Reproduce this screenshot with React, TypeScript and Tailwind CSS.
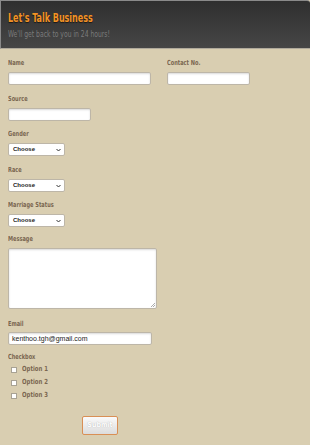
const narrow = { fontFamily: '"DejaVu Sans Condensed", "Liberation Sans", sans-serif' };

const Label = ({ children, className = "" }: { children: React.ReactNode; className?: string }) => (
  <div className={`h-[8px] text-[7px] leading-[8px] font-bold text-[#7a6650] ${className}`} style={narrow}>
    <span className="inline-block origin-left scale-x-[0.8] whitespace-nowrap">{children}</span>
  </div>
);

const Input = ({ w, value }: { w: string; value?: string }) => (
  <div
    className={`${w} h-[13px] bg-white border border-[#bdb6a8] rounded-[2px] shadow-[inset_0_1px_2px_rgba(0,0,0,0.15)] px-[3px] text-[7px] leading-[11px] text-[#222]`}
    style={{ fontFamily: '"Liberation Sans", Arial, sans-serif' }}
  >
    {value}
  </div>
);

const Select = () => (
  <div className="w-[57px] h-[13px] bg-white border border-[#bdb6a8] rounded-[2px] flex items-center justify-between pl-[4px] pr-[3px]">
    <span className="text-[6px] font-bold text-[#222]" style={{ fontFamily: '"Liberation Sans", Arial, sans-serif' }}>
      Choose
    </span>
    <svg width="5" height="4" viewBox="0 0 5 4">
      <path d="M0.5 1 L2.5 3 L4.5 1" stroke="#333" strokeWidth="1" fill="none" />
    </svg>
  </div>
);

const Option = ({ label }: { label: string }) => (
  <div className="h-[13px] flex items-center pl-[3px]">
    <div className="w-[6px] h-[6px] bg-white border border-[#a8a294]" />
    <span className="ml-[5px] text-[7px] font-bold text-[#7a6650]" style={narrow}>
      <span className="inline-block origin-left scale-x-[0.85] whitespace-nowrap">{label}</span>
    </span>
  </div>
);

export default function App() {
  return (
    <div className="w-[310px] h-[445px] bg-[#d9ceb1] overflow-hidden">
      <div className="h-[49px] bg-gradient-to-b from-[#2f2f2f] to-[#464646] border-l border-t border-[#8a8a8a] border-b border-b-[#b0aa9c] rounded-tr-[3px] pl-[7px] pt-[10px]">
        <div
          className="text-[12px] leading-[14px] font-bold text-[#f39224] [text-shadow:0_1px_1px_rgba(0,0,0,0.6)]"
          style={narrow}
        >
          <span className="inline-block origin-left scale-x-[0.74] whitespace-nowrap">Let's Talk Business</span>
        </div>
        <div className="mt-[5px] text-[8px] leading-[10px] text-[#7b7b7b]" style={narrow}>
          <span className="inline-block origin-left scale-x-[0.84] whitespace-nowrap">We'll get back to you in 24 hours!</span>
        </div>
      </div>

      <div className="pl-[8px] pt-[10px]">
        <div className="flex">
          <div className="w-[159px]">
            <Label>Name</Label>
            <div className="mt-[5px]">
              <Input w="w-[143px]" />
            </div>
          </div>
          <div>
            <Label>Contact No.</Label>
            <div className="mt-[5px]">
              <Input w="w-[83px]" />
            </div>
          </div>
        </div>

        <Label className="mt-[10px]">Source</Label>
        <div className="mt-[5px]">
          <Input w="w-[83px]" />
        </div>

        <Label className="mt-[9px]">Gender</Label>
        <div className="mt-[5px]">
          <Select />
        </div>

        <Label className="mt-[10px]">Race</Label>
        <div className="mt-[5px]">
          <Select />
        </div>

        <Label className="mt-[9px]">Marriage Status</Label>
        <div className="mt-[5px]">
          <Select />
        </div>

        <Label className="mt-[8px]">Message</Label>
        <div className="mt-[5px] relative w-[149px] h-[61px] bg-white border border-[#bdb6a8] rounded-[2px] shadow-[inset_0_1px_2px_rgba(0,0,0,0.15)]">
          <svg className="absolute right-[1px] bottom-[1px]" width="5" height="5" viewBox="0 0 5 5">
            <path d="M1 5 L5 1 M3 5 L5 3" stroke="#999" strokeWidth="0.8" />
          </svg>
        </div>

        <Label className="mt-[11px]">Email</Label>
        <div className="mt-[4px]">
          <Input w="w-[144px]" value="kenthoo.tgh@gmail.com" />
        </div>

        <Label className="mt-[8px]">Checkbox</Label>
        <div className="mt-[2px]">
          <Option label="Option 1" />
          <Option label="Option 2" />
          <Option label="Option 3" />
        </div>

        <div className="mt-[14px] ml-[74px] w-[36px] h-[19px] border border-[#d98f55] rounded-[2px] bg-gradient-to-b from-[#fafafa] to-[#dcdcdc] flex items-center justify-center">
          <span className="text-[7px] font-bold text-white [text-shadow:0_0_1px_rgba(0,0,0,0.3)]" style={narrow}>
            Submit
          </span>
        </div>
      </div>
    </div>
  );
}
